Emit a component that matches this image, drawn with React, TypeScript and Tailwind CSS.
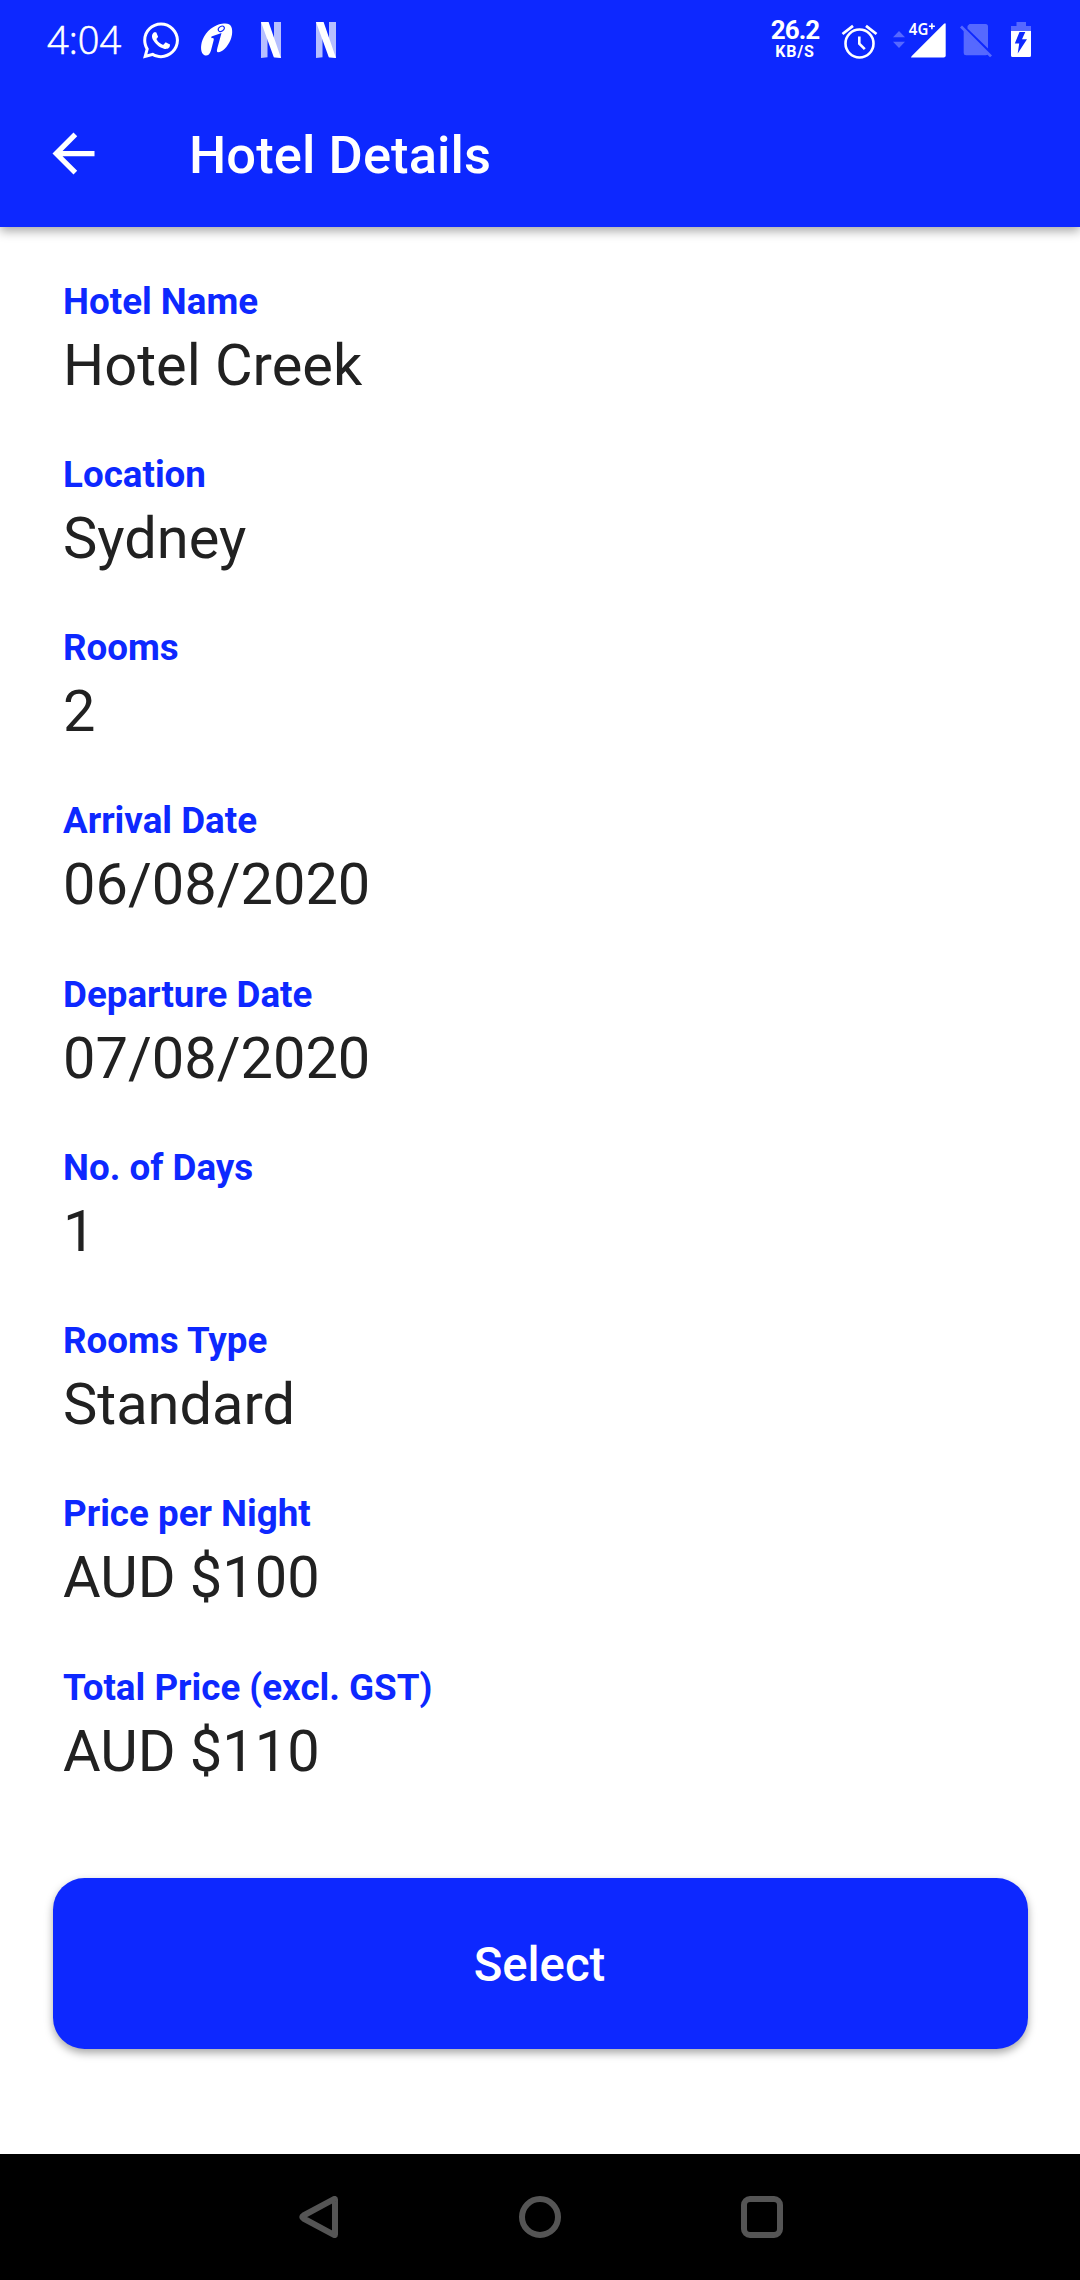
import React from "react";
import { FaWhatsapp } from "react-icons/fa";

const details: { label: string; value: string }[] = [
  { label: "Hotel Name", value: "Hotel Creek" },
  { label: "Location", value: "Sydney" },
  { label: "Rooms", value: "2" },
  { label: "Arrival Date", value: "06/08/2020" },
  { label: "Departure Date", value: "07/08/2020" },
  { label: "No. of Days", value: "1" },
  { label: "Rooms Type", value: "Standard" },
  { label: "Price per Night", value: "AUD $100" },
  { label: "Total Price (excl. GST)", value: "AUD $110" },
];

function NetflixIcon() {
  return (
    <svg viewBox="0 0 20 36" className="h-9 w-5 shrink-0" fill="#fff">
      <path d="M0 0H6.5V35.2L0 36Z" opacity="0.7" />
      <path d="M13 0H20V36L13 35.2Z" opacity="0.7" />
      <path d="M0 0H7.6L20 36Q16 35.2 12.8 35.2Z" />
    </svg>
  );
}

function PenIcon() {
  return (
    <svg viewBox="200 20 34 40" className="h-10 w-[34px] shrink-0">
      <path
        d="M229 24.3C233 26.5 233 34 230.500 40C227.500 47 222 52.500 218 52.300C216.200 52 217 49.500 217.800 46.500L221.500 33L211.500 36.400L211.300 38.200C213.500 37.800 214.200 38.500 213.600 40.500L211 50.500C209.700 55 207 56.300 204.500 55.300C200.500 53.500 200.200 46 202.500 40C206 31 214.500 24.700 222 23.800C225 23.300 227.500 23.400 229 24.300Z"
        fill="#fff"
      />
      <ellipse cx="221.300" cy="28.800" rx="3.300" ry="2.300" transform="rotate(-35 221.300 28.800)" fill="#fff" stroke="#0d28ff" strokeWidth="1.100" />
    </svg>
  );
}

function StatusBar() {
  return (
    <div className="flex h-20 items-center justify-between pl-[47px] pr-[48px] text-white">
      <div className="flex items-center">
        <span className="w-24 pb-[2px] font-['Open_Sans','Noto_Sans',sans-serif] text-[38px] font-light leading-[40px] [-webkit-text-stroke:0.6px_#fff]">
          4:04
        </span>
        <FaWhatsapp className="h-[41px] w-9 shrink-0" />
        <div className="ml-[21px]">
          <PenIcon />
        </div>
        <div className="ml-[27px] flex gap-[35px]">
          <NetflixIcon />
          <NetflixIcon />
        </div>
      </div>
      <div className="flex items-center">
        <div className="flex w-[54px] flex-col items-center font-[Roboto,sans-serif] font-bold">
          <span className="text-[26px] leading-[21px] tracking-[-1px]">26.2</span>
          <span className="pt-[2px] text-[16px] leading-[18px] tracking-[0.800px]">KB/S</span>
        </div>
        <svg viewBox="840 20 40 40" className="ml-[18px] size-10" fill="none" stroke="#fff" strokeWidth="2.600">
          <circle cx="859.500" cy="43.500" r="14" />
          <path d="M859.300 36.500V43.700L864.800 49.200" />
          <path d="M842.500 34L853 25.800M876.500 34L866 25.800" strokeWidth="2.800" />
        </svg>
        <svg viewBox="892 20 54 40" className="ml-[12px] h-10 w-[54px] overflow-visible" fill="#fff">
          <path d="M893 37.200L899 31L905 37.200ZM893 41.800L899 48L905 41.800Z" opacity="0.300" />
          <path d="M911 57.500Q911 56.800 912 55.800L944 23.800Q945.700 22.500 945.700 24.500V55.500Q945.700 57.500 943.700 57.500Z" />
          <text x="908.800" y="35" fontSize="15.500" fontWeight="600" fontFamily="'Noto Sans', sans-serif" textLength="19.500" lengthAdjust="spacingAndGlyphs">4G</text>
          <path d="M931.900 23.300V29.300M928.900 26.300H934.900" stroke="#fff" strokeWidth="1.600" />
        </svg>
        <svg viewBox="960 20 33 40" className="ml-[13px] h-10 w-[33px]" fill="#fff" opacity="0.300">
          <path d="M970.500 24H986.500Q989 24 989 26.500V48.500L968.500 28.500V26Z" />
          <path d="M964.700 30.500L989 54.300Q988 55.300 986.500 55.300H967.200Q964.700 55.300 964.700 52.800Z" />
          <path d="M961 27.500L991 57.300L993 55.500L963 25.500Z" />
        </svg>
        <svg viewBox="1010 20 22 40" className="ml-[18px] h-10 w-[22px]" fill="#fff">
          <path d="M1016.500 22H1026V26H1031V31H1011V26H1016.500Z" opacity="0.300" />
          <path
            fillRule="evenodd"
            d="M1011 31H1031V55.500Q1031 57 1029.500 57H1012.500Q1011 57 1011 55.500ZM1019.500 32L1014.800 43.500H1019.200L1017.700 53.500L1027 39.300H1022L1025.300 32Z"
          />
        </svg>
      </div>
    </div>
  );
}

function AppBar() {
  return (
    <div className="flex h-[147px] items-center pl-[42px]">
      <svg viewBox="0 0 24 24" className="size-[63px]" fill="#fff">
        <path d="M20 11H7.830l5.590-5.590L12 4l-8 8 8 8 1.410-1.410L7.830 13H20v-2z" />
      </svg>
      <h1 className="ml-[84px] pt-[3px] text-[52.500px] font-medium leading-[62px] tracking-[0.080px] text-white">Hotel Details</h1>
    </div>
  );
}

function NavBar() {
  return (
    <nav className="flex h-[126px] items-center justify-center gap-[180px]">
      <svg viewBox="0 0 42 42" className="size-[42px]" fill="none" stroke="#555" strokeWidth="6" strokeLinejoin="round">
        <path d="M38 3.500V38.500Q38 39.500 37 38.800L6.500 22.500Q4 21 6.500 19.500L37 3.200Q38 2.500 38 3.500Z" />
      </svg>
      <span className="size-[42px] rounded-full border-6 border-[#555]" />
      <span className="size-[42px] rounded-[9px] border-6 border-[#555]" />
    </nav>
  );
}

export default function App() {
  return (
    <div className="flex h-[2280px] w-[1080px] flex-col overflow-hidden bg-black font-[Roboto,sans-serif]">
      <header className="z-10 shrink-0 bg-[#0d28ff] shadow-[0_4px_10px_rgba(0,0,0,0.350)]">
        <StatusBar />
        <AppBar />
      </header>
      <main className="flex h-[1927px] shrink-0 flex-col bg-white px-[52.500px] pt-[52.600px]">
        <dl className="px-[10.500px]">
          {details.map((d) => (
            <div key={d.label} className="h-[173.250px]">
              <dt className="text-[36.750px] font-bold leading-[43px] text-[#0d28ff]">{d.label}</dt>
              <dd className="mt-[8px] text-[57.750px] leading-[68px] text-[#212121]">{d.value}</dd>
            </div>
          ))}
        </dl>
        <button className="mt-[39.200px] h-[171px] w-full rounded-[31.500px] bg-[#0d28ff] pr-[1px] pt-[3px] text-[47.250px] font-medium text-white shadow-[0_4px_8px_rgba(0,0,0,0.350)]">
          Select
        </button>
      </main>
      <NavBar />
    </div>
  );
}
